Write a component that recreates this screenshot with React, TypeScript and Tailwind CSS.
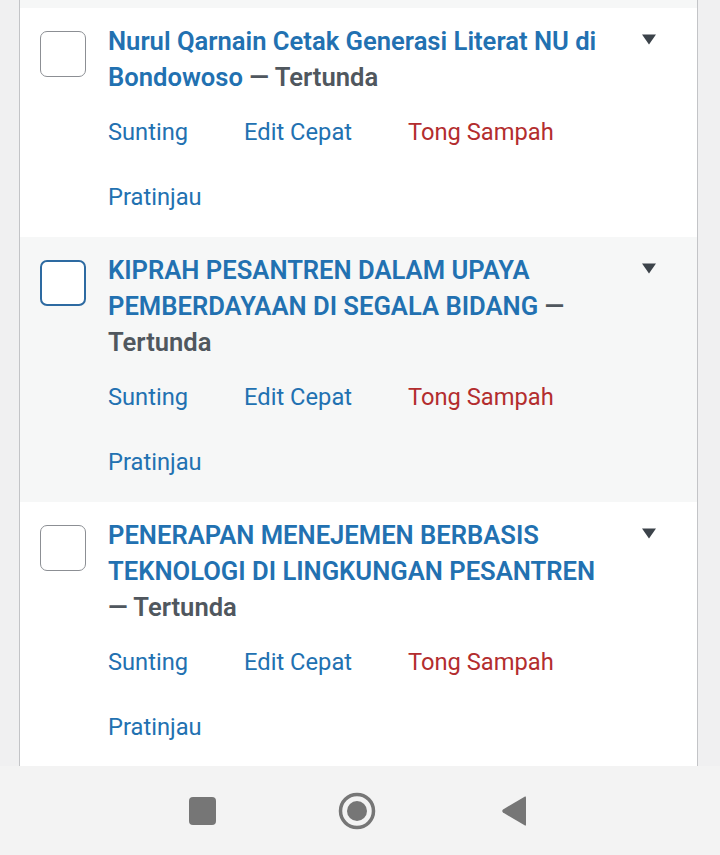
import { ReactNode } from "react";

type Post = {
    title: string;
    status: string;
    striped?: boolean;
    focused?: boolean;
};

const posts: Post[] = [
    { title: "Nurul Qarnain Cetak Generasi Literat NU di Bondowoso", status: "Tertunda" },
    { title: "KIPRAH PESANTREN DALAM UPAYA PEMBERDAYAAN DI SEGALA BIDANG", status: "Tertunda", striped: true, focused: true },
    { title: "PENERAPAN MENEJEMEN BERBASIS TEKNOLOGI DI LINGKUNGAN PESANTREN", status: "Tertunda" },
];

function RowAction({ children, danger }: { children: ReactNode; danger?: boolean }) {
    return (
        <a className={`${danger ? "text-[#b32d2e]" : "text-[#2271b1]"} leading-[65px] cursor-pointer`}>
            {children}
        </a>
    );
}

function PostRow({ post }: { post: Post }) {
    return (
        <div className={`flex ${post.striped ? "bg-[#f6f7f7]" : "bg-white"}`}>
            <div className="w-[88px] shrink-0 pl-[20px] pt-[23px]">
                <div
                    className={`w-[46px] h-[46px] rounded-[7px] bg-white ${
                        post.focused ? "border-[2.5px] border-[#2d6aa1]" : "border-[1.5px] border-[#8c8f94]"
                    }`}
                />
            </div>

            <div className="w-[506px] shrink-0 pt-[15px] pb-[7px]">
                <p className="text-[25.6px] leading-[36px] font-semibold">
                    <a className="text-[#2271b1]">{post.title}</a>
                    <span className="text-[#50575e]"> — {post.status}</span>
                </p>
                <div className="flex flex-wrap gap-x-[56px] pt-[5px] text-[23.7px]">
                    <RowAction>Sunting</RowAction>
                    <RowAction>Edit Cepat</RowAction>
                    <RowAction danger>Tong Sampah</RowAction>
                    <RowAction>Pratinjau</RowAction>
                </div>
            </div>

            <div className="flex-1 pt-[26px] pl-[27px]">
                <svg width="16" height="11" viewBox="0 0 16 11">
                    <path d="M1 0.5 H15 L8 10.5 Z" fill="#3c434a" />
                </svg>
            </div>
        </div>
    );
}

function NavBar() {
    return (
        <div className="h-[89px] bg-[#f3f3f3] flex items-center pl-[189px]">
            <div className="w-[27px] h-[28px] rounded-[4px] bg-[#767676]" />
            <svg className="ml-[122px]" width="38" height="38" viewBox="0 0 38 38">
                <circle cx="19" cy="19" r="16.5" fill="none" stroke="#767676" strokeWidth="3.5" />
                <circle cx="19" cy="19" r="10" fill="#767676" />
            </svg>
            <svg className="ml-[125px]" width="26" height="32" viewBox="0 0 26 32">
                <path d="M24 1.5 Q25 1 25 2.5 V29.5 Q25 31 24 30.5 L2 17.5 Q0.5 16 2 14.5 Z" fill="#767676" />
            </svg>
        </div>
    );
}

export default function App() {
    return (
        <div className="w-[720px] h-[855px] overflow-hidden bg-[#f0f0f1] flex flex-col font-['Roboto',sans-serif]">
            <div className="flex-1 overflow-hidden pl-[19px] pr-[22px]">
                <div className="border-x border-[#c3c4c7] h-full bg-white">
                    <div className="h-[8px] bg-[#f6f7f7]" />
                    {posts.map((post, i) => (
                        <PostRow key={i} post={post} />
                    ))}
                </div>
            </div>
            <NavBar />
        </div>
    );
}
